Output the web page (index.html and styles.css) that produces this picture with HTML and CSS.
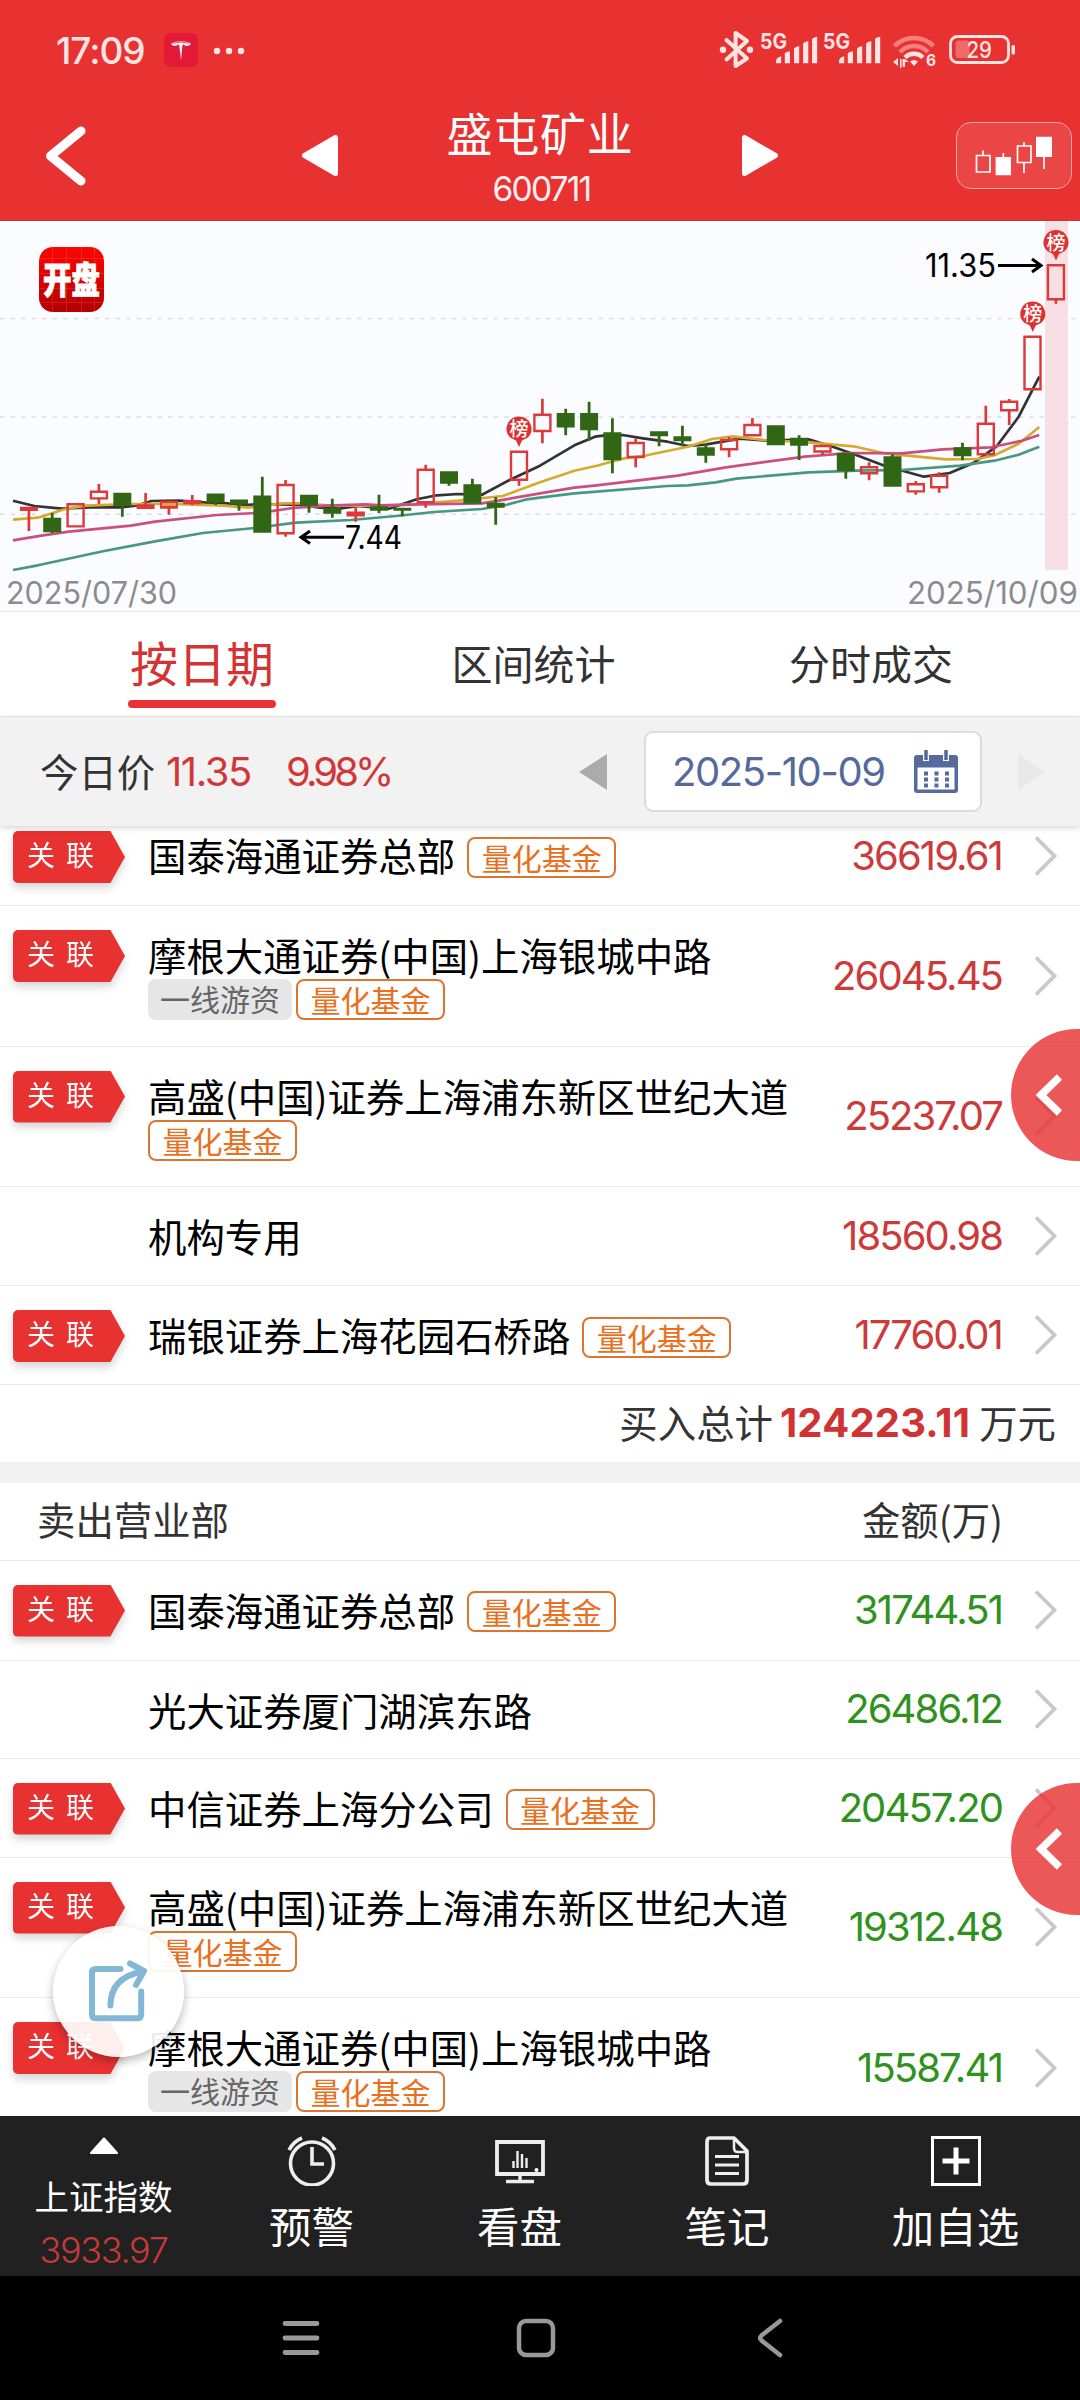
FILE: index.html
```html
<!DOCTYPE html>
<html lang="zh-CN">
<head>
<meta charset="utf-8">
<title>盛屯矿业 600711</title>
<link rel="stylesheet" href="styles.css">
</head>
<body>
<svg width="0" height="0" class="defs">
  <symbol id="next" viewBox="0 0 24 40"><path d="M2 1.500L20.500 20L2 38.500" fill="none" stroke="#c8c8c8" stroke-width="3.700"/></symbol>
  <symbol id="pin" viewBox="0 0 26 32"><path d="M13 .5a12.300 12.300 0 0 0-8.500 21.300L10 24.500L13 31L16 24.500L21.500 21.800A12.300 12.300 0 0 0 13 .5Z" fill="#de3232"/></symbol>
</svg>
<div class="screen">
  <header class="header">
    <div class="status">
      <span class="time">17:09</span>
      <svg class="tesla" viewBox="0 0 34 34"><rect width="34" height="34" rx="7" fill="#e31937"/><path d="M7 10.500c6-3 14-3 20 0c-1 2.200-3 2.600-6 2.200l-1-1.400c-1 .3-1.500.9-1.700 2.200L17 27l-1.600-13.500c-.2-1.300-.7-1.900-1.700-2.200l-1 1.400c-3 .4-4.700 0-5.700-2.200Z" fill="#fff"/><path d="M8.500 10.300q8.500-2.500 17 0" fill="none" stroke="#e31937" stroke-width=".8"/></svg>
      <svg class="more" viewBox="0 0 32 8"><g fill="#ffe6e6"><circle cx="4" cy="4" r="3.200"/><circle cx="16" cy="4" r="3.200"/><circle cx="28" cy="4" r="3.200"/></g></svg>
      <svg class="signals" viewBox="716 26 304 46">
        <g fill="none" stroke="#ffe4e4" stroke-width="4" stroke-linejoin="round" stroke-linecap="round"><path d="M726.500 59.500L747 41L735.600 33V66L747 58.500L726.500 40"/></g>
        <g fill="#ffe4e4"><circle cx="723" cy="49.700" r="3.200"/><circle cx="750" cy="49.700" r="3.200"/></g>
        <g id="bars" fill="#ffe4e4">
          <text x="760" y="48.500" font-size="21.500" font-weight="700" textLength="27" lengthAdjust="spacingAndGlyphs">5G</text>
          <path d="M776 63.300v-3q1-3 5.200-4v7zM784.800 63.300v-10q1-1.500 5.200-2v12zM794 63.300v-14.500q1-2 5.200-2.500v17zM803.100 63.300v-19.500q1-2 5.200-2.500v22zM812 63.300v-24q1-2 5.200-2.500v26.500z"/>
        </g>
        <use href="#bars" x="63"/>
        <g fill="none" stroke-width="4.500" stroke-linecap="butt"><path d="M894.500 46A27.500 27.500 0 0 1 933.500 46M900 52A19.500 19.500 0 0 1 928 52" stroke="#f58080"/><path d="M905 57.500A12.700 12.700 0 0 1 923 57.500" stroke="#ffe4e4"/></g>
        <path d="M910 61.500q4-3 8 0L914 66zM893 62l5-4v8zM900 59h1.500v9H900zM902.500 59l2.500 0v8h-1.500l-1-1zM905 59l4 3h-4z" fill="#ffe4e4"/>
        <text x="926" y="66" font-size="15.500" font-weight="700" fill="#ffe4e4">6</text>
        <rect x="950.500" y="36.500" width="58" height="26" rx="7" fill="none" stroke="#ffe4e4" stroke-width="2.800"/>
        <rect x="955.600" y="40.500" width="14" height="17.500" rx="3" fill="#f06a6a"/>
        <text x="966.500" y="57.700" font-size="23" font-weight="500" fill="#ffe4e4" textLength="25.500" lengthAdjust="spacingAndGlyphs">29</text>
        <rect x="1011.500" y="45" width="3.500" height="9.500" rx="1.500" fill="#ffe4e4"/>
      </svg>
    </div>
    <div class="navbar">
      <svg class="back" viewBox="0 0 44 62"><path d="M37 6L6.500 31L37 56" fill="none" stroke="#fff" stroke-width="9" stroke-linecap="round" stroke-linejoin="round"/></svg>
      <svg class="tri prev" viewBox="0 0 38 43"><path d="M34.500 3.500V39.500L3.500 21.500Z" fill="#fff" stroke="#fff" stroke-width="5" stroke-linejoin="round"/></svg>
      <div class="title"><h1>盛屯矿业</h1><p>600711</p></div>
      <svg class="tri" viewBox="0 0 38 43"><path d="M3.500 3.500V39.500L34.500 21.500Z" fill="#fff" stroke="#fff" stroke-width="5" stroke-linejoin="round"/></svg>
      <div class="kline">
        <svg viewBox="975 134 80 42"><g fill="none" stroke="#fff" stroke-width="1.700"><path d="M977.500 154.500H991V171H977.500ZM984 149.500V154M1004.300 152V157M1018.500 145H1032V161.500H1018.500ZM1025 141V145M1025 162V172M1045 155V168"/></g><path d="M996.600 156H1012V174.300H996.600ZM1037 135.700H1053V156H1037Z" fill="#fff"/></svg>
      </div>
    </div>
  </header>

  <section class="chart">
    <svg viewBox="0 221 1080 390">
      <defs><linearGradient id="logo" x2="0" y2="1"><stop stop-color="#ff0500"/><stop offset="1" stop-color="#b30000"/></linearGradient></defs>
      <path d="M0 318.500H1080M0 417H1080M0 514.300H1080" stroke="#dedee6" stroke-width="1.500" stroke-dasharray="4.500 6"/>
      <rect x="1045" y="221" width="23" height="349" fill="#f8dfe4"/>
      <rect x="39" y="247" width="65" height="65" rx="14" fill="url(#logo)"/>
      <path d="M39 258.500H104M39 273.500H104M39 288.500H104M39 302.500H104M52.500 247V312M66.500 247V312M81.500 247V312M94.500 247V312" stroke="#fff" stroke-width=".8" opacity=".15"/>
      <text x="43" y="293.500" font-size="37" font-weight="900" fill="#fff" stroke="#fff" stroke-width=".8" textLength="57" lengthAdjust="spacingAndGlyphs">开盘</text>
      <g fill="none" stroke-width="2.700" stroke-linejoin="round">
        <polyline stroke="#333" points="13,500.7 34.4,506 62,508.7 89.5,507.3 120.5,507.3 137.7,505.3 151.5,501 179,500.7 206.6,502.7 227,503.3 241,505.3 262,504 299.6,505 320,507.7 339,508.7 358,506 389,508.7 416.7,499.3 437,495.3 458,494 482,494.7 509.6,480 540,465.7 574.4,445.3 595,436.7 605.4,435.3 622.6,435 643,438.3 667.4,441.7 688,446 705.3,444.7 739.7,438.7 767.3,440.7 808.6,439.3 832.7,446.7 856.8,455.3 884.4,465.7 924,476.7 949.8,473 973.9,462.7 996.3,446.7 1018.7,416.7 1039.3,376.7"/>
        <polyline stroke="#d6aa2c" points="13,519.7 37.9,517.7 65.4,509 86,505.7 131,504 172,504 224,505.7 248,507.7 282,503.3 303,503.3 330.6,505.7 379,505.7 413,504.3 458,500.7 502.8,496 540,482.3 574.4,470.7 596.8,465.7 622.6,458.7 646.7,455.3 688,446.7 712,439 732.8,436.3 763.8,440 808.6,442.3 853.4,446.3 884.4,453.3 946.3,459.3 977.3,459 994.5,455.3 1018.7,443.7 1039.3,427"/>
        <polyline stroke="#c94f83" points="13,540.3 41.3,535.7 68.9,531.7 130.9,525.7 155,521.7 217,515 261.7,512.7 292.7,508 327,505.7 365,504.3 382,505.3 420,504.3 482,503.3 506,499.3 540,493.3 574.4,487.7 596.8,485.3 677.7,475.7 726,467.3 805,456.7 850,453 901.6,453.3 942.9,449.3 991,447.3 1022,440.7 1039.3,435"/>
        <polyline stroke="#489780" points="13,570 37.9,565.3 103,551.3 155,541.3 203,533 254.8,528 296,522.7 351,520 396,516 434,512 482,509 506,505 527,499.3 540,497.7 574.4,493.3 667.4,486 688,485.3 715.6,482.3 736.3,478.7 808.6,472.3 856.8,470.7 901.6,470 960,465.7 994.5,460.7 1018.7,454.7 1039.3,446.7"/>
      </g>
      <path stroke="#306614" stroke-width="2.800" d="M52.200 513V533M122.300 494V516.700M215.600 494V505M239 500V510.700M262.300 476.700V530M309 495V512.700M332.300 498.700V517.700M379 494.700V513M402.300 508V516.300M449 472V485.700M472.400 478.700V500M495.700 497V524.700M565.700 408.700V435.300M589.100 401.700V440.700M612.400 418.300V473.300M659.100 432V446.300M682.400 425.700V446.300M705.800 444V462.700M799.100 435.300V460M845.800 455V478.700M892.500 454.300V480M962.500 442.700V460.300"/>
      <path fill="#306614" d="M43.200 517.700h18v14.500h-18zM113.300 492.700h18v13.300h-18zM206.600 493.500h18v9h-18zM230 499.500h18v5h-18zM253.300 495.500h18v37.200h-18zM300 494.700h18v11h-18zM323.300 508.300h18v5.400h-18zM370 506.300h18v4.400h-18zM393.300 507.700h18v3h-18zM440 471.300h18v12.400h-18zM463.400 484.300h18v19.400h-18zM486.700 502.700h18v5h-18zM556.700 413h18v14.500h-18zM580.100 413h18v17.300h-18zM603.400 432.300h18v28h-18zM650.100 431.300h18v5h-18zM673.400 436.300h18v5h-18zM696.800 447.300h18v8.400h-18zM766.800 425.300h18v20h-18zM790.100 437.700h18v8h-18zM836.800 452.700h18v18.500h-18zM883.500 456.300h18v30.500h-18zM953.500 447.300h18v9h-18z"/>
      <path stroke="#dc3a3a" stroke-width="2.700" d="M28.900 508V531M98.900 484V491M98.900 499V504M145.600 493V505M168.900 508V514.700M192.300 495V505M285.600 480V485M285.600 534V536.700M355.700 507.300V512M355.700 516V521.700M425.700 464.700V469M425.700 503V507.700M519 480V485.700M542.400 398.700V414M542.400 432V443.300M635.700 438.300V442M635.700 458V467.300M729.100 437V439M729.100 450V457.300M752.400 418V424M822.500 452V455.300M869.100 462.300V467M869.100 474V480.300M915.800 481V484M915.800 492V494.700M939.200 472.300V475M939.200 488V492.700M985.800 405.700V423M1009.200 399V401M1009.200 411V425M1055.900 300V303.700"/>
      <path fill="none" stroke="#dc3a3a" stroke-width="2.400" d="M67.600 504.200h16v22.200h-16zM90.900 491.700h16v6.700h-16zM277.600 485h16v48.200h-16zM347.700 512.700h16v2.600h-16zM417.700 469.700h16v32.600h-16zM511 451.700h16v28h-16zM534.400 414.700h16v16.300h-16zM627.700 443h16v14h-16zM721.100 440h16v9.200h-16zM744.400 425h16v10.200h-16zM814.500 446h16v5.500h-16zM861.100 467.200h16v6h-16zM907.800 484.200h16v7.200h-16zM931.200 475.700h16v11.500h-16zM977.800 423.700h16v30.600h-16zM1001.200 401.700h16v8.500h-16zM1024.500 336.700h16v52.600h-16zM1047.900 265.300h16v34h-16z"/>
      <path fill="#dc3a3a" d="M19.900 506.700h18v4.200h-18zM136.600 504.300h18v4.600h-18zM159.900 500.700h18v8h-18zM183.300 500h18v4.300h-18z"/><path fill="#e9a03a" d="M162 503h14v3h-14z"/>
      <use href="#pin" x="1043" y="229.500" width="26" height="32"/><use href="#pin" x="1019.800" y="301" width="26" height="32"/><use href="#pin" x="506" y="416" width="26" height="32"/>
      <g font-size="19" font-weight="500" fill="#fff" text-anchor="middle"><text x="1056" y="249.500">榜</text><text x="1032.800" y="321">榜</text><text x="519" y="436">榜</text></g>
      <g fill="none" stroke="#000" stroke-width="3"><path d="M344 537.300H301M310 531L301 537.300L310 543.600M998 265.500H1041M1032 259L1041 265.500L1032 272"/></g>
      <text x="345" y="549" font-size="32" textLength="57" lengthAdjust="spacingAndGlyphs">7.44</text>
      <text x="925" y="277" font-size="32" textLength="71" lengthAdjust="spacingAndGlyphs">11.35</text>
      <g font-size="31.500" fill="#8c8c8c"><text x="6" y="603.500" textLength="171" lengthAdjust="spacingAndGlyphs">2025/07/30</text><text x="907" y="603.500" textLength="171" lengthAdjust="spacingAndGlyphs">2025/10/09</text></g>
    </svg>
  </section>

  <nav class="tabs"><span class="active">按日期</span><span>区间统计</span><span>分时成交</span></nav>

  <section class="filter">
    <span class="label">今日价</span><span class="price">11.35</span><span class="pct">9.98%</span>
    <svg class="step" viewBox="0 0 28 36"><path d="M28 0V36L0 18Z" fill="#ababab"/></svg>
    <div class="datebox"><span>2025-10-09</span>
      <svg viewBox="0 0 46 43"><path d="M4 5H42Q45 5 45 8V40Q45 43 42 43H4Q1 43 1 40V8Q1 5 4 5Z" fill="#566a9d"/><path d="M4.500 17.500H41.500V39.500H4.500Z" fill="#fff"/><path d="M13 0V11M33 0V11" stroke="#fff" stroke-width="6"/><path d="M13 0V10M33 0V10" stroke="#566a9d" stroke-width="3.500"/><path d="M11 23.500H37M11 29.500H37M11 35.500H37" stroke="#566a9d" stroke-width="4" stroke-dasharray="4 6.500"/></svg>
    </div>
    <svg class="step off" viewBox="0 0 28 36"><path d="M0 0V36L28 18Z" fill="#e9e9e9"/></svg>
  </section>

  <main class="list">
    <div class="row first"><i class="tag">关联</i><div class="name">国泰海通证券总部<b class="quant">量化基金</b></div><span class="amt">36619.61</span><svg class="next"><use href="#next"/></svg></div>
    <div class="row two"><i class="tag">关联</i><div class="name">摩根大通证券(中国)上海银城中路<div class="sub"><b class="hot">一线游资</b><b class="quant">量化基金</b></div></div><span class="amt">26045.45</span><svg class="next"><use href="#next"/></svg></div>
    <div class="row two"><i class="tag">关联</i><div class="name">高盛(中国)证券上海浦东新区世纪大道<div class="sub"><b class="quant">量化基金</b></div></div><span class="amt">25237.07</span><svg class="next"><use href="#next"/></svg></div>
    <div class="row"><div class="name">机构专用</div><span class="amt">18560.98</span><svg class="next"><use href="#next"/></svg></div>
    <div class="row"><i class="tag">关联</i><div class="name">瑞银证券上海花园石桥路<b class="quant">量化基金</b></div><span class="amt">17760.01</span><svg class="next"><use href="#next"/></svg></div>
    <div class="total"><span>买入总计</span><strong>124223.11</strong><span>万元</span></div>
    <div class="heading"><span>卖出营业部</span><span>金额(万)</span></div>
    <div class="sell">
      <div class="row tall"><i class="tag">关联</i><div class="name">国泰海通证券总部<b class="quant">量化基金</b></div><span class="amt">31744.51</span><svg class="next"><use href="#next"/></svg></div>
      <div class="row short"><div class="name">光大证券厦门湖滨东路</div><span class="amt">26486.12</span><svg class="next"><use href="#next"/></svg></div>
      <div class="row"><i class="tag">关联</i><div class="name">中信证券上海分公司<b class="quant">量化基金</b></div><span class="amt">20457.20</span><svg class="next"><use href="#next"/></svg></div>
      <div class="row two"><i class="tag">关联</i><div class="name">高盛(中国)证券上海浦东新区世纪大道<div class="sub"><b class="quant">量化基金</b></div></div><span class="amt">19312.48</span><svg class="next"><use href="#next"/></svg></div>
      <div class="row two"><i class="tag">关联</i><div class="name">摩根大通证券(中国)上海银城中路<div class="sub"><b class="hot">一线游资</b><b class="quant">量化基金</b></div></div><span class="amt">15587.41</span><svg class="next"><use href="#next"/></svg></div>
    </div>
  </main>

  <footer class="bottom">
    <div class="index"><svg class="up" viewBox="0 0 30 18"><path d="M15 1.500L28 16H2Z" fill="#fff" stroke="#fff" stroke-width="2" stroke-linejoin="round"/></svg><span>上证指数</span><em>3933.97</em></div>
    <div class="item"><svg viewBox="0 0 50 50"><g fill="none" stroke="#eee" stroke-width="3.600"><circle cx="25" cy="27.500" r="21.500"/><path d="M2 14Q7 5 15 2M48 14Q43 5 35 2"/><path d="M25 11V28H37" stroke-width="3.600"/></g></svg><span>预警</span></div>
    <div class="item"><svg viewBox="0 0 50 50"><g fill="none" stroke="#eee"><path d="M2 6H48V38H2Z" stroke-width="3.800"/><path d="M25 38V44M11 45.500H39" stroke-width="3.400"/><path d="M18.500 25V32M22.500 15V32M27 18V32M31.500 22V32" stroke-width="2.400"/></g><circle cx="41.500" cy="34" r="2" fill="#fff"/></svg><span>看盘</span></div>
    <div class="item"><svg viewBox="0 0 50 50"><g fill="none" stroke="#eee" stroke-width="3.700" stroke-linejoin="round"><path d="M8 2H32L45 15V44Q45 48 41 48H9Q5 48 5 44V6Q5 2 8 2Z"/><path d="M32 2V12Q32 16 36 16H45" stroke-width="2.500"/><path d="M13 20.500H37M13 29H37M13 37.500H37" stroke-width="2.800"/></g></svg><span>笔记</span></div>
    <div class="item"><svg viewBox="0 0 50 50"><g fill="none" stroke="#fff"><path d="M1.500 1.500H48.500V48.500H1.500Z" stroke-width="3"/><path d="M25 11.500V38.500M11.500 25H38.500" stroke-width="5"/></g></svg><span>加自选</span></div>
  </footer>
  <div class="sysnav">
    <svg viewBox="0 0 40 40"><path d="M4 5.500H36M4 20H36M4 34.500H36" fill="none" stroke="#999" stroke-width="4.800" stroke-linecap="round"/></svg>
    <svg viewBox="0 0 40 40"><rect x="3" y="3" width="34" height="34" rx="7" fill="none" stroke="#999" stroke-width="4.500"/></svg>
    <svg viewBox="0 0 40 40"><path d="M29 3L10.500 17.500Q8 20 10.500 22.500L29 37" fill="none" stroke="#999" stroke-width="4.500" stroke-linecap="round"/></svg>
  </div>

  <div class="drawer upper"><svg viewBox="0 0 28 42"><path d="M24.500 3L6 21L24.500 39" fill="none" stroke="#fff" stroke-width="7.500"/></svg></div>
  <div class="drawer lower"><svg viewBox="0 0 28 42"><path d="M24.500 3L6 21L24.500 39" fill="none" stroke="#fff" stroke-width="7.500"/></svg></div>
  <div class="share"><svg viewBox="53.500 1926.500 130 130"><g fill="none" stroke="#82b8d6" stroke-width="6" stroke-linecap="round" stroke-linejoin="round"><path d="M121 1969.500H96Q92.500 1969.500 92.500 1973V2015Q92.500 2018.700 96 2018.700H138Q141.700 2018.700 141.700 2015V1992"/><path d="M110.900 2006Q111 1978 143 1972M130.500 1964L144.500 1971.500L136.500 1985.500"/></g></svg></div>
</div>
</body>
</html>
```
FILE: styles.css
```css
* { box-sizing: border-box; }
body { margin: 0; font-family: Inter, "Noto Sans CJK SC", sans-serif; font-weight: 400; color: #000; background: #fff; }
h1, p { margin: 0; font-weight: 400; }
i, em { font-style: normal; }
svg { display: block; flex: none; }
.defs { position: absolute; }
.screen { position: relative; width: 1080px; height: 2400px; overflow: hidden; display: flex; flex-direction: column; }
.screen > * { flex: none; }

.header { height: 221px; background: #e83131; border-bottom: 1px solid #b04048; }
.status { height: 100px; display: flex; align-items: center; padding: 0 60px 0 56px; }
.time { width: 92px; font-size: 37px; font-weight: 500; letter-spacing: -1px; color: #ffe4e4; white-space: nowrap; }
.tesla { width: 34px; height: 34px; margin-left: 16px; }
.more { width: 32px; height: 8px; margin: 2px 0 0 15px; }
.signals { width: 304px; height: 46px; margin: 0 0 2px auto; }
.navbar { height: 111px; display: flex; align-items: center; padding: 0 8px 0 44px; }
.back { width: 44px; height: 62px; }
.prev { margin-left: 213px; }
.tri { width: 38px; height: 43px; }
.title { flex: none; width: 402px; text-align: center; color: #fff; padding-top: 8px; }
.title h1 { font-size: 46px; line-height: 56px; letter-spacing: .7px; }
.title p { font-size: 33.500px; line-height: 48px; letter-spacing: -1.800px; padding: 3px 0 0 3px; color: #ffeeee; }
.kline { margin-left: auto; width: 116px; height: 67px; border: 1.500px solid #f5a5a5; border-radius: 15px; background: #eb4646; display: flex; align-items: center; justify-content: center; }
.kline svg { width: 80px; height: 42px; }

.chart { height: 391px; background: #fbfcff; border-bottom: 1px solid #e4e5e9; }
.chart svg { width: 1080px; height: 390px; }

.tabs { height: 105px; display: grid; grid-template-columns: 334px 329px 346px; padding-left: 35px; justify-items: center; font-size: 41px; color: #333; border-bottom: 1px solid #e6e6e6; }
.tabs span { line-height: 106px; }
.tabs .active { position: relative; height: 96px; padding: 0 2px; font-size: 48px; line-height: 105px; color: #d43333; }
.tabs .active::after { content: ""; position: absolute; left: 0; right: 0; bottom: 0; height: 8px; border-radius: 4px; background: #e83131; }

.filter { height: 109px; background: #f2f2f2; display: flex; align-items: center; padding-left: 40px; font-size: 40px; color: #333; position: relative; z-index: 1; box-shadow: 0 2px 6px rgba(0,0,0,.16); }
.filter .label { font-size: 38.400px; width: 126px; padding-bottom: 4px; }
.price, .pct { color: #d03838; letter-spacing: -1.400px; }
.price { width: 120px; }
.pct { width: 293px; letter-spacing: -3.900px; }
.step { width: 28px; height: 36px; }
.datebox { width: 338px; height: 81px; margin-left: 37px; border: 2px solid #dcdcdc; border-radius: 9px; background: #fff; display: flex; align-items: center; padding-left: 26px; color: #56699b; letter-spacing: -1.400px; }
.datebox span { width: 241px; white-space: nowrap; }
.datebox svg { width: 46px; height: 43px; }
.off { margin-left: 36px; }

.list { height: 1290px; overflow: hidden; background: #fff; }
.row { height: 99px; border-bottom: 1px solid #e9e9e9; display: grid; grid-template-columns: 135px 1fr auto 24px; align-items: center; padding: 0 22px 0 13px; }
.row.first { margin-top: -20px; height: 100px; }
.row.two { height: 140.500px; }
.row.tall { height: 100px; }
.row.short { height: 98px; }
.tag { grid-column: 1; align-self: start; margin-top: 24px; width: 112px; height: 52px; padding-left: 14px; font-size: 28px; line-height: 51px; letter-spacing: 11px; color: #fff; position: relative; z-index: 0; filter: drop-shadow(0 5px 4px rgba(0,0,0,.16)); }
.first .tag { margin-top: 25px; }
.tag::before { content: ""; position: absolute; inset: 0; z-index: -1; background: #e83131; border-radius: 5px 0 0 5px; clip-path: polygon(0 0, 87% 0, 100% 50%, 87% 100%, 0 100%); }
.name { grid-column: 2; grid-row: 1; align-self: start; padding-top: 24px; font-family: "Noto Sans CJK SC", sans-serif; font-size: 38.400px; line-height: 48px; white-space: nowrap; display: flex; align-items: center; }
.two .name { display: block; }
.quant, .hot { font-weight: 400; font-size: 30px; line-height: 36px; height: 41px; border-radius: 8px; }
.quant { width: 149px; text-align: center; border: 2px solid #dc7530; color: #e8701e; margin: 6px 0 0 12px; background: #fff; }
.hot { width: 144px; text-align: center; background: #e6e6e6; color: #666; line-height: 39px; margin-right: 4px; }
.sub { display: flex; margin-top: 1px; }
.sub .quant { margin: 0; }
.amt { grid-column: 3; grid-row: 1; margin-right: 32px; padding-bottom: 1px; font-size: 40px; letter-spacing: -1.900px; color: #cc3a3a; }
.sell .amt { color: #2f9220; }
.next { grid-column: 4; grid-row: 1; width: 24px; height: 40px; }
.total { height: 76.500px; display: flex; align-items: center; justify-content: flex-end; padding: 0 24px 4px 0; font-size: 38.400px; color: #333; }
.total strong { font-size: 40px; color: #d03333; letter-spacing: .2px; margin: 0 9px 0 7px; padding-top: 3px; }
.heading { height: 99px; border-top: 21px solid #f2f2f2; border-bottom: 1px solid #e9e9e9; display: flex; justify-content: space-between; align-items: center; padding: 0 77px 6px 37px; font-family: "Noto Sans CJK SC", sans-serif; font-size: 38.400px; color: #333; }

.bottom { height: 160px; background: #212121; color: #fff; display: grid; grid-template-columns: 207px 209px 207px 208px 1fr; }
.index, .item { display: flex; flex-direction: column; align-items: center; }
.up { width: 30px; height: 18px; margin-top: 21px; }
.index span { font-size: 34.500px; line-height: 50px; margin-top: 18px; }
.index em { font-size: 36px; line-height: 40px; margin-top: 7px; letter-spacing: -1.3px; color: #c63a3a; font-weight: 300; }
.item svg { width: 50px; height: 50px; margin-top: 20px; }
.item span { font-size: 42.500px; line-height: 60px; margin-top: 12px; }
.sysnav { height: 124px; background: #000; display: grid; grid-template-columns: repeat(3, 235px); padding-left: 183px; justify-items: center; align-items: center; }
.sysnav svg { width: 40px; height: 40px; }

.drawer { position: absolute; left: 1011px; width: 132px; height: 132px; border-radius: 50%; background: rgba(232,49,49,.81); display: flex; align-items: center; padding-left: 24px; }
.drawer svg { width: 28px; height: 42px; }
.upper { top: 1029px; }
.lower { top: 1783px; }
.share { position: absolute; left: 53px; top: 1926px; width: 131px; height: 131px; border-radius: 50%; background: rgba(255,255,255,.92); box-shadow: 0 4px 10px rgba(0,0,0,.28); }
.share svg { width: 130px; height: 130px; }
```
